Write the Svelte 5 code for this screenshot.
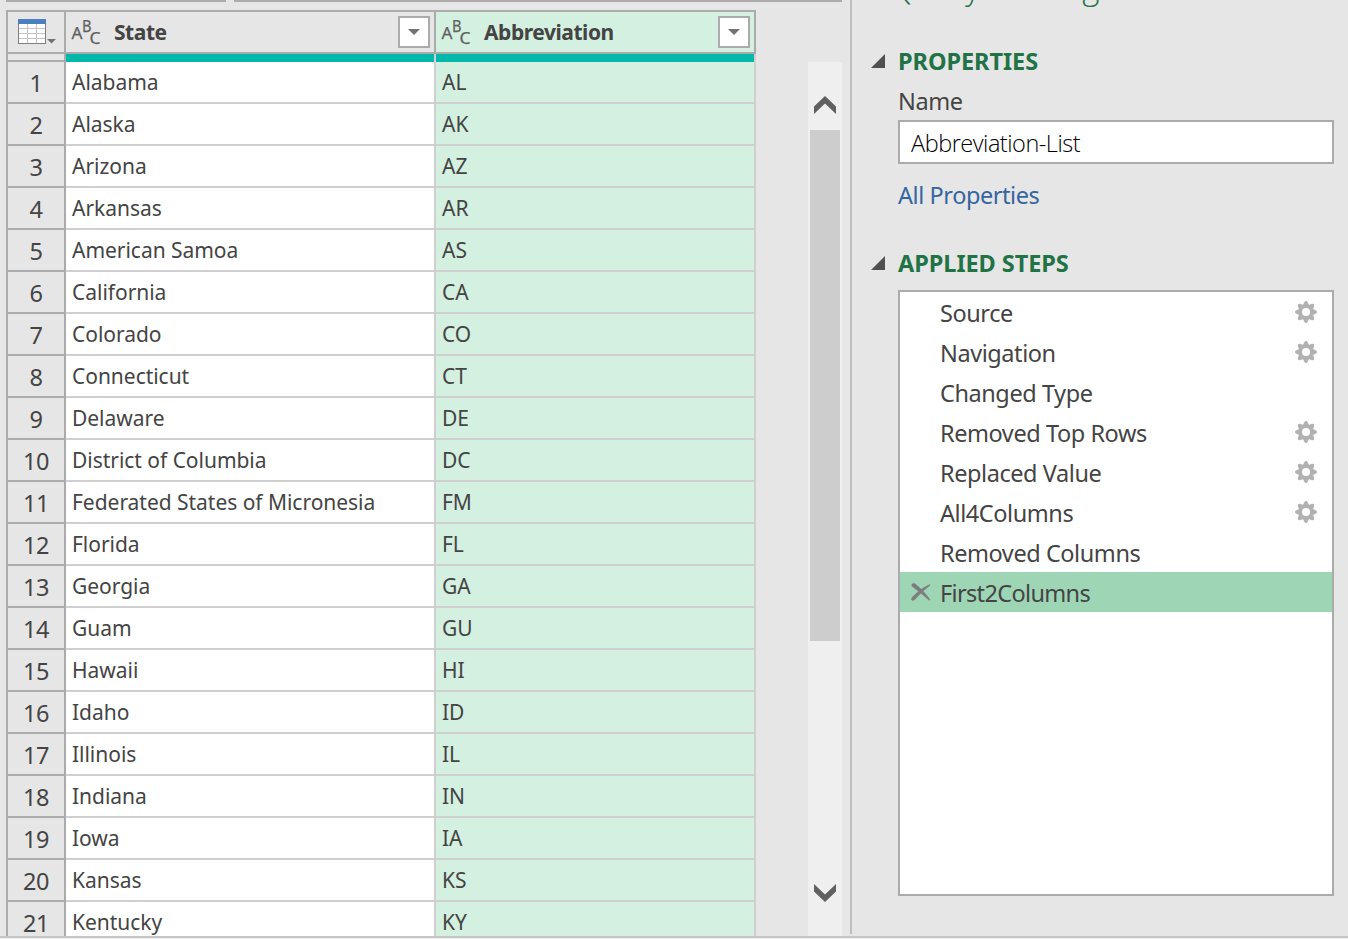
<script>
  const rows = [
    ['Alabama', 'AL'], ['Alaska', 'AK'], ['Arizona', 'AZ'], ['Arkansas', 'AR'],
    ['American Samoa', 'AS'], ['California', 'CA'], ['Colorado', 'CO'], ['Connecticut', 'CT'],
    ['Delaware', 'DE'], ['District of Columbia', 'DC'], ['Federated States of Micronesia', 'FM'],
    ['Florida', 'FL'], ['Georgia', 'GA'], ['Guam', 'GU'], ['Hawaii', 'HI'], ['Idaho', 'ID'],
    ['Illinois', 'IL'], ['Indiana', 'IN'], ['Iowa', 'IA'], ['Kansas', 'KS'], ['Kentucky', 'KY']
  ];
  const steps = [
    { name: 'Source', gear: true },
    { name: 'Navigation', gear: true },
    { name: 'Changed Type' },
    { name: 'Removed Top Rows', gear: true },
    { name: 'Replaced Value', gear: true },
    { name: 'All4Columns', gear: true },
    { name: 'Removed Columns' },
    { name: 'First2Columns', selected: true }
  ];
  const teeth = [0, 45, 90, 135, 180, 225, 270, 315];
</script>

{#snippet columnHead(label, selected)}
  <div class="head" class:selected>
    <svg class="abc" width="30" height="28" viewBox="0 0 30 28">
      <text x="0.5" y="21" textLength="11" lengthAdjust="spacingAndGlyphs">A</text>
      <text x="11" y="13.5" textLength="9.5" lengthAdjust="spacingAndGlyphs">B</text>
      <text x="18.5" y="25.5" textLength="11" lengthAdjust="spacingAndGlyphs">C</text>
    </svg>
    <span class="label">{label}</span>
    <button class="filter" aria-label="Filter">
      <svg width="12" height="6" viewBox="0 0 12 6"><path d="M0 0H12L6 6Z" fill="#737373" /></svg>
    </button>
  </div>
{/snippet}

{#snippet gear()}
  <svg class="gear" width="22" height="22" viewBox="-11 -11 22 22" fill="#b1b1b1">
    {#each teeth as angle}
      <path d="M-3.2 -6.3L-1.6 -10Q0 -12 1.6 -10L3.2 -6.3Z" transform="rotate({angle})" />
    {/each}
    <circle r="5.9" fill="none" stroke="#b1b1b1" stroke-width="3.8" />
  </svg>
{/snippet}

<div class="app">
  <main class="workspace">
    <div class="formula"><i class="tab"></i><i class="bar"></i></div>
    <div class="body">
      <div class="grid">
        <div class="corner">
          <svg width="40" height="26" viewBox="0 0 40 26">
            <path d="M0 0H28V25H0Z" fill="#7f7f7f" />
            <path d="M0 0H28V5H0Z" fill="#4a80bd" />
            <path d="M1 5H27V24H1Z" fill="#fff" />
            <path d="M9.5 5V24M18.5 5V24M1 9.5H27M1 14.5H27M1 19.5H27" stroke="#c3c3c3" fill="none" />
            <path d="M29 20H38L33.5 24.5Z" fill="#737373" />
          </svg>
        </div>
        {@render columnHead('State', false)}
        {@render columnHead('Abbreviation', true)}
        <div class="gap"></div>
        <div class="quality"></div>
        <div class="quality"></div>
        {#each rows as [state, code], i}
          <div class="num"><span>{i + 1}</span></div>
          <div class="cell">{state}</div>
          <div class="cell picked">{code}</div>
        {/each}
      </div>
      <div class="scroll">
        <svg class="up" width="22" height="18" viewBox="0 0 22 18"><path d="M0 10.5L11 0L22 10.5V18L11 7.5L0 18Z" fill="#606060" /></svg>
        <div class="thumb"></div>
        <svg class="down" width="22" height="18" viewBox="0 0 22 18"><path d="M0 0L11 10.5L22 0V7.5L11 18L0 7.5Z" fill="#606060" /></svg>
      </div>
    </div>
  </main>

  <aside class="panel">
    <h1>Query Settings</h1>
    <h2 class="properties">
      <svg width="14" height="14" viewBox="0 0 14 14"><path d="M14 0V14H0Z" fill="#505050" /></svg>
      <span>PROPERTIES</span>
    </h2>
    <div class="name">Name</div>
    <div class="input"><span>Abbreviation-List</span></div>
    <div class="link">All Properties</div>
    <h2 class="applied">
      <svg width="14" height="14" viewBox="0 0 14 14"><path d="M14 0V14H0Z" fill="#505050" /></svg>
      <span>APPLIED STEPS</span>
    </h2>
    <div class="steps">
      {#each steps as step}
        <div class="step" class:current={step.selected}>
          <span class="mark">
            {#if step.selected}
              <svg width="20" height="18" viewBox="0 0 20 18" fill="#7d7d7d" stroke="#7d7d7d" stroke-width=".5">
                <path d="M1 1.2Q2 0 4 .8Q11 6 19 16.6L18.3 17.3Q10 10 1 3.2Q.4 2 1 1.2Z" />
                <path d="M18.7 1.4L19 2.3Q10 9 3.8 16.6Q2.2 18 .8 17Q0 15.6 1 14.5Q8.5 6 18.7 1.4Z" />
              </svg>
            {/if}
          </span>
          <span class="title">{step.name}</span>
          {#if step.gear}{@render gear()}{/if}
        </div>
      {/each}
    </div>
  </aside>
  <footer></footer>
</div>

<style>
  :global(body) { margin: 0; background: #e6e6e6; overflow: hidden; }
  * { box-sizing: border-box; }
  .app {
    width: 1348px; height: 939px; overflow: hidden;
    display: grid; grid-template: 936px 3px / 852px 496px;
    background: #e6e6e6; color: #444;
    font-family: "Noto Sans", "Open Sans", sans-serif;
  }
  svg { display: block; flex: none; }
  .workspace { height: 934px; border-right: 2px solid #bfbfbf; }
  .formula { display: flex; gap: 8px; height: 10px; padding-left: 6px; }
  .formula i { height: 2px; background: #ababab; }
  .tab { width: 220px; }
  .bar { width: 608px; }
  .body { display: flex; height: 926px; padding-left: 6px; gap: 52px; }
  .grid {
    width: 750px; height: 926px; flex: none; overflow: hidden;
    display: grid; grid-template-columns: 60px 370px 320px;
    grid-template-rows: 44px 8px; grid-auto-rows: 42px;
  }
  .corner { border: 2px solid #ababab; padding: 7px 0 0 10px; }
  .head {
    display: flex; align-items: center;
    border: solid #ababab; border-width: 2px 2px 2px 0;
    padding: 0 4px 0 5px;
  }
  .head.selected { background: #d4f0e0; }
  .abc { overflow: visible; font-size: 17px; fill: #606060; stroke: #606060; stroke-width: .25px; }
  .label { flex: 1; margin-left: 13px; font-size: 21px; font-weight: 700; line-height: 40px; letter-spacing: -.45px; }
  .filter {
    width: 32px; height: 32px; padding: 0;
    display: grid; place-items: center;
    background: #fff; border: 2px solid #ababab;
  }
  .gap { border: solid #ababab; border-width: 0 2px 2px; }
  .quality { background: #01b8aa; border-right: 2px solid #d0d0d0; background-clip: padding-box; }
  .num {
    border: solid #ababab; border-width: 0 2px 2px;
    text-align: center; font-size: 23.5px; line-height: 42px; letter-spacing: -.4px;
  }
  .cell {
    background: #fff; border: solid #d0d0d0; border-width: 0 2px 2px 0;
    padding-left: 6px; font-size: 21px; line-height: 41px; white-space: nowrap; letter-spacing: -.03px;
  }
  .picked { background: #d4f0e0; }
  .scroll {
    width: 34px; height: 874px; margin-top: 52px; flex: none;
    display: flex; flex-direction: column; align-items: center;
    background: #efefef; padding: 34px 0 34px;
  }
  .thumb { width: 30px; height: 511px; margin-top: 16px; background: #cdcdcd; }
  .down { margin-top: auto; }
  .panel {
    height: 936px; overflow: hidden; padding-left: 46px;
    display: flex; flex-direction: column; font-size: 23.5px; white-space: nowrap; letter-spacing: -.43px;
  }
  h1, h2 { margin: 0; color: #217346; }
  h1 {
    height: 40px; flex: none; line-height: 40px; margin: -33px 0 0 -8px;
    font-family: "Open Sans", sans-serif; font-weight: 300; font-size: 33px; letter-spacing: -.1px; word-spacing: 9px;
  }
  h2 {
    display: flex; align-items: center; gap: 13px; height: 40px; flex: none;
    margin-left: -27px; font-size: 23.5px; line-height: 40px; letter-spacing: -.05px;
  }
  .properties { margin-top: 34px; }
  .name { height: 39px; line-height: 41px; }
  .input {
    width: 436px; height: 44px; flex: none; border: 2px solid #ababab; background: #fff;
    color: #000; padding-left: 11px; line-height: 42px;
    font-family: "Open Sans", sans-serif; font-weight: 300; letter-spacing: -.48px;
  }
  .link { height: 40px; line-height: 39px; margin-top: 12px; color: #3465a0; }
  .applied { margin-top: 27px; }
  .steps {
    width: 436px; height: 606px; flex: none; margin-top: 7px;
    border: 2px solid #ababab; background: #fff;
  }
  .step { display: flex; height: 40px; padding: 0 15px 0 11px; line-height: 42px; }
  .mark { width: 29px; padding-top: 11px; }
  .title { flex: 1; }
  .gear { margin-top: 9px; }
  .current { background: #9ed5b5; letter-spacing: -.65px; }
  footer { grid-column: 1 / 3; border-top: 2px solid #c6c6c6; background: #eee; }
</style>
